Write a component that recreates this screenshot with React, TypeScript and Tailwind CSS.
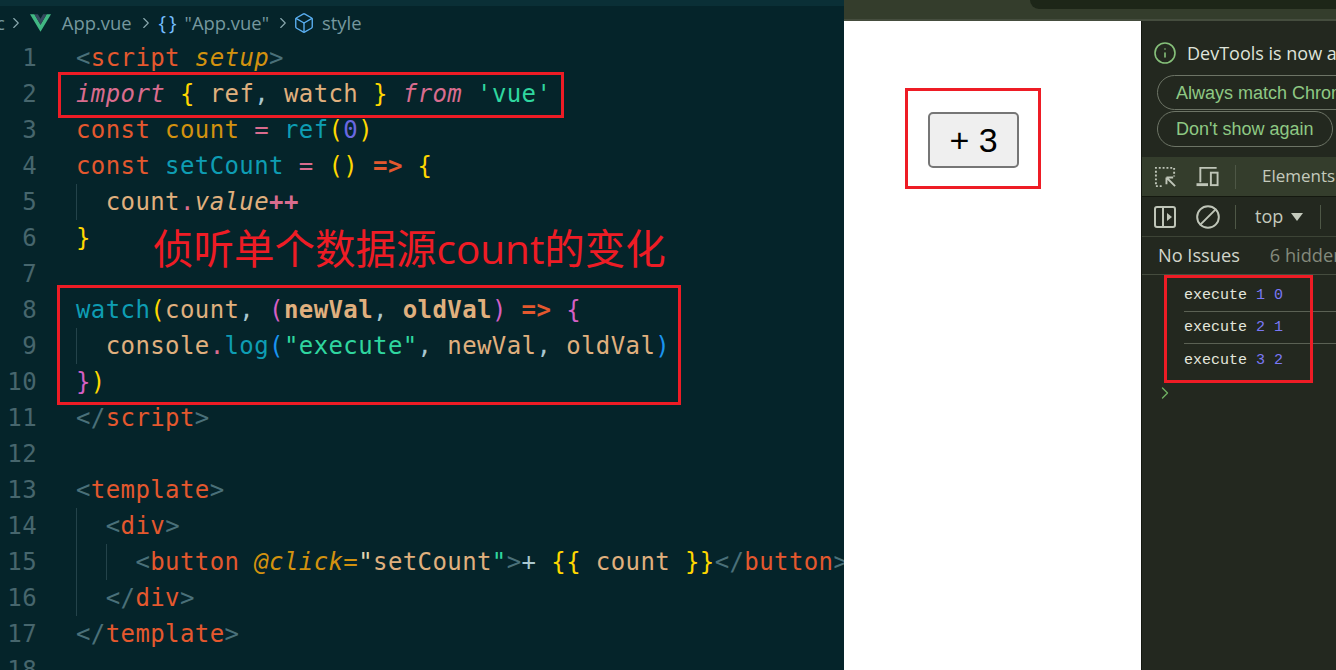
import { Ban, Box, ChevronRight, Info } from "lucide-react";
import type { ReactNode } from "react";

const tag = "text-[#4a7079]";
const name = "text-[#e4582e]";
const attr = "text-[#d3920f] italic";
const kw = "text-[#d96c8e] italic";
const op = "text-[#d96c8e]";
const plain = "text-[#e0b07e]";
const fn = "text-[#0e9db3]";
const str = "text-[#2fd69f]";
const yellow = "text-[#ffd700]";
const pink = "text-[#d45fc4]";
const blue = "text-[#1a94f0]";
const decl = "text-[#e4582e]";

function Guide({ depth = 1 }: { depth?: number }) {
  return (
    <>
      <span className="absolute top-0 left-0 h-9 w-px bg-[#24434a]" />
      {depth > 1 && <span className="absolute top-0 left-[30px] h-9 w-px bg-[#24434a]" />}
    </>
  );
}

function Line({ n, guides = 0, children }: { n: number; guides?: number; children?: ReactNode }) {
  return (
    <div className="flex h-9 items-center whitespace-pre">
      <span className="w-[37px] shrink-0 text-right text-[#47666d]">{n}</span>
      <div className="relative ml-[39px] flex h-9 items-center">
        {guides > 0 && <Guide depth={guides} />}
        <span>{children}</span>
      </div>
    </div>
  );
}

function CodePane() {
  return (
    <div className="flex w-[844px] shrink-0 flex-col overflow-hidden bg-[#05242a]">
      <div className="h-1.5 shrink-0 bg-[#0a2f36]" />
      <div className="flex h-[34px] shrink-0 items-center whitespace-pre font-['Open_Sans',sans-serif] text-[18.4px] text-[#76989f]">
        <span className="-ml-1">c</span>
        <ChevronRight className="ml-[2px] h-[18px] w-[18px] text-[#8aa9af]" strokeWidth={1.5} />
        <svg viewBox="0 0 24 20" className="ml-[5px] h-[18px] w-[21px]">
          <path d="M0 0h5l7 12L19 0h5L12 20z" fill="#41b883" />
          <path d="M5 0h4l3 5 3-5h4l-7 12z" fill="#35495e" />
        </svg>
        <span className="ml-[11px]">App.vue</span>
        <ChevronRight className="ml-[5px] h-[18px] w-[18px] text-[#8aa9af]" strokeWidth={1.5} />
        <span className="ml-[4px] text-[20px] tracking-[3px] text-[#75beff]">{"{}"}</span>
        <span className="ml-[5px]">"App.vue"</span>
        <ChevronRight className="ml-[5px] h-[18px] w-[18px] text-[#8aa9af]" strokeWidth={1.5} />
        <Box className="ml-[1px] h-[22px] w-[22px] text-[#5aaef0]" strokeWidth={1.5} />
        <span className="ml-[7px]">style</span>
      </div>
      <div className="font-['DejaVu_Sans_Mono',monospace] text-[24px] tracking-[0.4px]">
        <Line n={1}>
          <span className={tag}>&lt;</span>
          <span className={name}>script</span> <span className={attr}>setup</span>
          <span className={tag}>&gt;</span>
        </Line>
        <Line n={2}>
          <span className={kw}>import</span> <span className={yellow}>{"{"}</span> <span className={plain}>ref</span>
          <span className="text-[#a9c7cf]">,</span> <span className={plain}>watch</span>{" "}
          <span className={yellow}>{"}"}</span> <span className={kw}>from</span> <span className={str}>'vue'</span>
        </Line>
        <Line n={3}>
          <span className={decl}>const</span> <span className="text-[#d3920f]">count</span>{" "}
          <span className={op}>=</span> <span className={fn}>ref</span>
          <span className={yellow}>(</span>
          <span className="text-[#6a68e0]">0</span>
          <span className={yellow}>)</span>
        </Line>
        <Line n={4}>
          <span className={decl}>const</span> <span className={fn}>setCount</span> <span className={op}>=</span>{" "}
          <span className={yellow}>()</span> <span className="font-bold text-[#e4582e]">=&gt;</span>{" "}
          <span className={yellow}>{"{"}</span>
        </Line>
        <Line n={5} guides={1}>
          {"  "}
          <span className={plain}>count</span>
          <span className={op}>.</span>
          <span className={`${plain} italic`}>value</span>
          <span className={`${op} font-bold`}>++</span>
        </Line>
        <Line n={6}>
          <span className={yellow}>{"}"}</span>
        </Line>
        <Line n={7} />
        <Line n={8}>
          <span className={fn}>watch</span>
          <span className={yellow}>(</span>
          <span className={plain}>count</span>
          <span className="text-[#a9c7cf]">,</span> <span className={pink}>(</span>
          <span className={`${plain} font-bold`}>newVal</span>
          <span className="text-[#a9c7cf]">,</span> <span className={`${plain} font-bold`}>oldVal</span>
          <span className={pink}>)</span> <span className="font-bold text-[#e4582e]">=&gt;</span>{" "}
          <span className={pink}>{"{"}</span>
        </Line>
        <Line n={9} guides={1}>
          {"  "}
          <span className={plain}>console</span>
          <span className={op}>.</span>
          <span className={fn}>log</span>
          <span className={blue}>(</span>
          <span className={str}>"execute"</span>
          <span className="text-[#a9c7cf]">,</span> <span className={plain}>newVal</span>
          <span className="text-[#a9c7cf]">,</span> <span className={plain}>oldVal</span>
          <span className={blue}>)</span>
        </Line>
        <Line n={10}>
          <span className={pink}>{"}"}</span>
          <span className={yellow}>)</span>
        </Line>
        <Line n={11}>
          <span className={tag}>&lt;/</span>
          <span className={name}>script</span>
          <span className={tag}>&gt;</span>
        </Line>
        <Line n={12} />
        <Line n={13}>
          <span className={tag}>&lt;</span>
          <span className={name}>template</span>
          <span className={tag}>&gt;</span>
        </Line>
        <Line n={14} guides={1}>
          {"  "}
          <span className={tag}>&lt;</span>
          <span className={name}>div</span>
          <span className={tag}>&gt;</span>
        </Line>
        <Line n={15} guides={2}>
          {"    "}
          <span className={tag}>&lt;</span>
          <span className={name}>button</span> <span className={attr}>@click=</span>
          <span className="text-[#e0d8b0]">"</span>
          <span className={plain}>setCount</span>
          <span className={str}>"</span>
          <span className={tag}>&gt;</span>
          <span className="text-[#a9c7cf]">+</span> <span className={yellow}>{"{{"}</span>{" "}
          <span className={plain}>count</span> <span className={yellow}>{"}}"}</span>
          <span className={tag}>&lt;/</span>
          <span className={name}>button</span>
          <span className={tag}>&gt;</span>
        </Line>
        <Line n={16} guides={1}>
          {"  "}
          <span className={tag}>&lt;/</span>
          <span className={name}>div</span>
          <span className={tag}>&gt;</span>
        </Line>
        <Line n={17}>
          <span className={tag}>&lt;/</span>
          <span className={name}>template</span>
          <span className={tag}>&gt;</span>
        </Line>
        <Line n={18} />
      </div>
    </div>
  );
}

function InspectIcon() {
  return (
    <svg viewBox="0 0 24 24" className="h-[23px] w-[23px]" fill="none" stroke="#bfc5b8" strokeWidth="2">
      <path d="M2 20V3h19v9" strokeDasharray="2 2" />
      <path d="M2 22h8" strokeDasharray="2 2" />
      <path d="M13 13l9 9M13 13h7M13 13v7" />
    </svg>
  );
}

function DeviceIcon() {
  return (
    <svg viewBox="0 0 24 24" className="h-[23px] w-[24px]" fill="none" stroke="#bfc5b8" strokeWidth="2">
      <path d="M4 18V3h17" />
      <path d="M0 20.5h12" strokeWidth="3" />
      <rect x="15" y="8" width="7" height="13" />
    </svg>
  );
}

function PanelIcon() {
  return (
    <svg viewBox="0 0 22 22" className="h-[22px] w-[22px]" fill="none" stroke="#bfc5b8" strokeWidth="2">
      <rect x="1" y="1" width="20" height="20" rx="2" />
      <path d="M9 1v20" />
      <path d="M13 7l5 4-5 4z" fill="#bfc5b8" stroke="none" />
    </svg>
  );
}

function LogRow({ a, b, last }: { a: number; b: number; last?: boolean }) {
  return (
    <div className={`flex h-8 items-center pt-[2px] whitespace-pre ${last ? "" : "border-b border-[#5b6154]"}`}>
      <span className="text-[#e3e6dc]">execute</span>
      <span className="text-[#7a78f5]"> {a} {b}</span>
    </div>
  );
}

function DevTools() {
  return (
    <div className="flex min-w-0 flex-1 flex-col overflow-hidden border-l border-[#14180f] bg-[#23281f] font-['Liberation_Sans',sans-serif]">
      <div className="flex shrink-0 flex-col pt-[21px] pl-[11px]">
        <div className="flex h-[22px] items-center whitespace-nowrap text-[#dfe3da]">
          <Info className="h-6 w-6 shrink-0 text-[#86c07a]" strokeWidth={1.6} />
          <span className="ml-[10px] font-['Open_Sans',sans-serif] text-[18px]">DevTools is now a</span>
        </div>
        <div className="mt-[11px] ml-[4px] flex flex-col gap-px text-[18px] text-[#8fc884]">
          <div className="flex h-[35px] w-[200px] items-center rounded-full border border-[#6d7466] pt-[2px] pl-[18px] whitespace-nowrap">
            Always match Chrome
          </div>
          <div className="flex h-[36px] w-[176px] items-center rounded-full border border-[#6d7466] pl-[18px] whitespace-nowrap">
            Don't show again
          </div>
        </div>
      </div>
      <div className="mt-[10px] flex h-10 shrink-0 items-center border-b border-[#14180f] bg-[#343d2c] pl-[12px] whitespace-nowrap">
        <InspectIcon />
        <span className="ml-[19px]">
          <DeviceIcon />
        </span>
        <span className="ml-[15px] h-6 w-px bg-[#4e5746]" />
        <span className="ml-[26px] -translate-y-px font-['Open_Sans',sans-serif] text-[17px] text-[#c4cabc]">Elements</span>
      </div>
      <div className="flex h-10 shrink-0 items-center border-b border-[#3d4436] pl-[12px] whitespace-nowrap">
        <PanelIcon />
        <Ban className="ml-[19px] h-[26px] w-[26px] -scale-x-100 text-[#bfc5b8]" strokeWidth={1.8} />
        <span className="ml-[14px] h-6 w-px bg-[#4e5746]" />
        <span className="ml-[19px] font-['Open_Sans',sans-serif] text-[18px] text-[#c4cabc]">top</span>
        <span className="ml-2 h-0 w-0 border-x-[6px] border-t-[8px] border-x-transparent border-t-[#c4cabc]" />
        <span className="ml-[17px] h-6 w-px bg-[#4e5746]" />
      </div>
      <div className="flex h-[38px] shrink-0 items-center border-b border-[#454c3e] pl-[16px] font-['Open_Sans',sans-serif] text-[18.2px] whitespace-nowrap">
        <span className="text-[#d2d6cb]">No Issues</span>
        <span className="ml-4 h-6 w-px bg-[#4e5746]" />
        <span className="ml-[14px] text-[#838a7c]">6 hidden</span>
      </div>
      <div className="mt-[5px] ml-[42px] font-['Liberation_Mono',monospace] text-[15px]">
        <LogRow a={1} b={0} />
        <LogRow a={2} b={1} />
        <LogRow a={3} b={2} last />
      </div>
      <ChevronRight className="mt-[7px] ml-[13px] h-5 w-5 text-[#6fb062]" strokeWidth={1.6} />
    </div>
  );
}

export default function App() {
  return (
    <div className="relative flex h-[670px] w-[1336px] overflow-hidden bg-[#05242a]">
      <CodePane />
      <div className="flex min-w-0 flex-1 flex-col">
        <div className="relative h-[21px] shrink-0 border-b-2 border-[#454d3e] bg-[#343d2c]">
          <div className="absolute top-0 right-0 left-[186px] h-[9px] rounded-bl-[10px] bg-[#1d2618]" />
        </div>
        <div className="flex min-h-0 flex-1">
          <div className="flex w-[297px] shrink-0 items-start bg-white pt-[91px] pl-[84px]">
            <button className="h-14 w-[91px] rounded-[5px] border-2 border-[#767676] bg-[#efefef] font-['Liberation_Sans',sans-serif] text-[34px] leading-none text-black">
              + 3
            </button>
          </div>
          <DevTools />
        </div>
      </div>

      {/* annotations drawn over the screenshot */}
      <div className="absolute top-[72px] left-[58px] h-[46px] w-[506px] border-[3px] border-[#ee1c25]" />
      <div className="absolute top-[285px] left-[57px] h-[120px] w-[624px] border-[3px] border-[#ee1c25]" />
      <div className="absolute top-[88px] left-[905px] h-[101px] w-[136px] border-[3px] border-[#ee1c25]" />
      <div className="absolute top-[275px] left-[1164px] h-[108px] w-[149px] border-[3px] border-[#ee1c25]" />
      <div className="absolute top-[219px] left-[153px] font-['Open_Sans','Noto_Sans_CJK_SC',sans-serif] text-[40.5px] leading-[60px] whitespace-nowrap text-[#ee1c25]">
        侦听单个数据源count的变化
      </div>
    </div>
  );
}
